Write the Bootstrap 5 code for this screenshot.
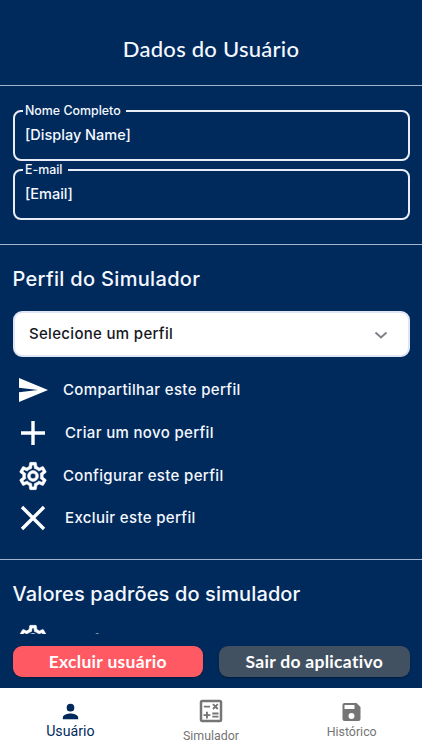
<!DOCTYPE html>
<html lang="pt-BR">
<head>
<meta charset="utf-8">
<meta name="viewport" content="width=device-width, initial-scale=1">
<title>Dados do Usuário</title>
<link href="https://cdn.jsdelivr.net/npm/bootstrap@5.3.0/dist/css/bootstrap.min.css" rel="stylesheet">
<style>
body{background:#002a5c;font-family:Inter,"Open Sans",sans-serif;color:#f5f8ff;font-weight:500}
.app-head{height:86px;padding-top:13px;border-bottom:1px solid #a3b4cf;font-family:Lato,sans-serif}
.app-head h1{font-size:22px;font-weight:500;letter-spacing:.25px}
.scroller{height:548px}
.fields{height:159px;padding:24px 12.5px 0;border-bottom:1px solid #a3b4cf}
.outlined{height:51px;border:2px solid #e9edf7;border-radius:8px;margin-bottom:8px;padding:13px 10.5px 0;font-size:14.5px;line-height:20px}
.outlined legend{position:absolute;top:-10px;left:8px;width:auto;padding:0 5px 0 2.5px;font-size:12.4px;line-height:18px;background:#002a5c;margin:0}
.profile{height:315px;padding:21px 12.5px 0;border-bottom:1px solid #a3b4cf}
.sect{font-size:20px;line-height:26px;font-weight:450;letter-spacing:.32px;margin:0}
.sect.tight{letter-spacing:.13px}
.picker{height:46px;border:2px solid #dfe5f4;border-radius:9px;color:#15181e;padding:1px 20px 0 14.5px;margin-top:19px;font-size:15px;letter-spacing:.31px}
.action{height:42.7px;font-size:15px;line-height:20px;letter-spacing:.34px;font-weight:550}
.action svg{width:30px;height:30px;margin-left:5.5px;margin-right:15px;flex:none}
.action.plain svg{margin-right:17px}
.defaults{padding:21px 12.5px 0}
.defaults .action{margin-top:11px}
.defaults .action span{padding-top:3px}
.foot{height:54px;padding:12px 12.5px 11px;gap:16px}
.foot .btn{height:31px;padding:0;border:0;border-radius:9px;font-family:Lato,sans-serif;font-weight:700;font-size:17.5px;letter-spacing:.3px;line-height:31px;color:#fff;box-shadow:0 1px 2px #0005}
.red{background:#ff5963}.slate{background:#425162}
.tabs{height:62px;font-family:Roboto,sans-serif;font-weight:400;color:#757575;font-size:12.4px;line-height:16px}
.tabs svg{display:block;fill:currentColor}
.tabs .on{color:#002a5c;font-size:14.2px}
.tabs .calc{line-height:20px}
</style>
<script src="https://cdn.jsdelivr.net/npm/bootstrap@5.3.0/dist/js/bootstrap.bundle.min.js" defer></script>
</head>
<body class="vh-100 overflow-hidden d-flex flex-column">
<svg class="d-none"><symbol id="gear" viewBox="0 0 24 24"><path d="M19.43 12.98c.04-.32.07-.64.07-.98s-.03-.66-.07-.98l2.11-1.65c.19-.15.24-.42.12-.64l-2-3.46a.5.5 0 0 0-.61-.22l-2.49 1a7.3 7.3 0 0 0-1.69-.98l-.38-2.65A.49.49 0 0 0 14 2h-4a.49.49 0 0 0-.49.42l-.38 2.65c-.61.25-1.17.59-1.69.98l-2.49-1a.5.5 0 0 0-.61.22l-2 3.46c-.13.22-.07.49.12.64l2.11 1.65c-.04.32-.07.65-.07.98s.03.66.07.98l-2.11 1.65c-.19.15-.24.42-.12.64l2 3.46c.12.22.39.3.61.22l2.49-1c.52.4 1.08.73 1.69.98l.38 2.65c.03.24.24.42.49.42h4c.25 0 .46-.18.49-.42l.38-2.65c.61-.25 1.17-.59 1.69-.98l2.49 1c.23.09.49 0 .61-.22l2-3.46c.12-.22.07-.49-.12-.64zm-1.98-1.71c.04.31.05.52.05.73s-.02.43-.05.73l-.14 1.13.89.7 1.08.84-.7 1.21-1.27-.51-1.04-.42-.9.68c-.43.32-.84.56-1.25.73l-1.06.43-.16 1.13-.2 1.35h-1.4l-.35-2.48-1.06-.43a5.7 5.7 0 0 1-1.23-.71l-.91-.7-1.06.43-1.27.51-.7-1.21 1.08-.84.89-.7-.14-1.13A7 7 0 0 1 6.5 12c0-.24.02-.5.05-.73l.14-1.13-.89-.7-1.08-.84.7-1.21 1.27.51 1.04.42.9-.68c.43-.32.84-.56 1.25-.73l1.06-.43.16-1.13.2-1.35h1.39l.35 2.48 1.06.43c.43.18.83.41 1.23.71l.91.7 1.06-.43 1.27-.51.7 1.21-1.07.85-.89.7zM12 8a4 4 0 1 0 0 8 4 4 0 0 0 0-8zm0 6a2 2 0 1 1 0-4 2 2 0 0 1 0 4z" fill="#fff" stroke="#fff" stroke-width=".4"/></symbol></svg>
<header class="app-head d-flex align-items-center justify-content-center flex-shrink-0"><h1 class="m-0">Dados do Usuário</h1></header>
<main class="scroller overflow-hidden flex-shrink-0">
<section class="fields">
<div class="outlined position-relative"><legend>Nome Completo</legend>[Display Name]</div>
<div class="outlined position-relative"><legend>E-mail</legend>[Email]</div>
</section>
<section class="profile">
<h2 class="sect">Perfil do Simulador</h2>
<div class="picker bg-white d-flex align-items-center justify-content-between mb-2"><span>Selecione um perfil</span>
<svg width="14" height="14" viewBox="0 0 14 14" fill="none" stroke="#7d828a" stroke-width="2"><path d="M1.5 4.5 7 9.5l5.5-5"/></svg></div>
<div class="pt-1">
<div class="action d-flex align-items-center"><svg viewBox="0 0 30 30" fill="#fff"><path d="M1 3v9.8L20 15 1 17.2V27l29-12z"/></svg><span>Compartilhar este perfil</span></div>
<div class="action plain d-flex align-items-center"><svg viewBox="0 0 30 30" stroke="#fff" stroke-width="3.4"><path d="M3 15h24M15 3v24"/></svg><span>Criar um novo perfil</span></div>
<div class="action d-flex align-items-center"><svg viewBox="1 1 22 22"><use href="#gear" width="24" height="24"/></svg><span>Configurar este perfil</span></div>
<div class="action plain d-flex align-items-center"><svg viewBox="0 0 30 30" stroke="#fff" stroke-width="3.4"><path d="m4 4 22 22M26 4 4 26"/></svg><span>Excluir este perfil</span></div>
</div>
</section>
<section class="defaults">
<h2 class="sect tight">Valores padrões do simulador</h2>
<div class="action d-flex align-items-center"><svg viewBox="1 1 22 22"><use href="#gear" width="24" height="24"/></svg><span>Configurar padrões</span></div>
</section>
</main>
<div class="foot d-flex flex-shrink-0"><button class="btn red flex-fill w-50">Excluir usuário</button><button class="btn slate flex-fill w-50">Sair do aplicativo</button></div>
<nav class="tabs bg-white row g-0 text-center flex-shrink-0">
<div class="col on d-flex flex-column align-items-center pt-2 mt-1"><svg width="25" height="23" viewBox="0 0 24 24"><path d="M12 12a4 4 0 1 0 0-8 4 4 0 0 0 0 8zm0 2c-2.67 0-8 1.34-8 4v2h16v-2c0-2.66-5.33-4-8-4z"/></svg><span>Usuário</span></div>
<div class="col calc d-flex flex-column align-items-center pt-2"><svg width="30" height="30" viewBox="0 0 24 24"><path d="M19 3H5a2 2 0 0 0-2 2v14c0 1.1.9 2 2 2h14a2 2 0 0 0 2-2V5a2 2 0 0 0-2-2zm0 16H5V5h14z"/><path d="M6.25 7.72h5v1.5h-5zM13 15.75h5v1.5h-5zM13 13.25h5v1.5h-5zM8 18h1.5v-2h2v-1.5h-2v-2H8v2H6V16h2zM14.09 10.95l1.41-1.41 1.41 1.41 1.06-1.06-1.41-1.42 1.41-1.41L16.91 6 15.5 7.41 14.09 6l-1.06 1.06 1.41 1.41-1.41 1.42z"/></svg><span>Simulador</span></div>
<div class="col d-flex flex-column align-items-center pt-2 mt-1"><svg width="25" height="24" viewBox="0 0 24 24"><path d="M17 3H5a2 2 0 0 0-2 2v14a2 2 0 0 0 2 2h14a2 2 0 0 0 2-2V7zm-5 16a3 3 0 1 1 0-6 3 3 0 0 1 0 6zm3-10H5V5h10z"/></svg><span>Histórico</span></div>
</nav>
</body>
</html>
